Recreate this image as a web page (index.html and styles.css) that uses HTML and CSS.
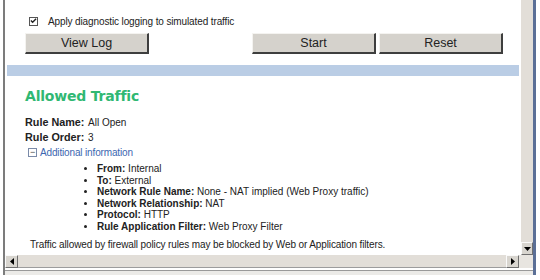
FILE: index.html
```html
<!DOCTYPE html>
<html lang="en">
<head>
    <meta charset="UTF-8">
    <title>Traffic Simulator</title>
    <link rel="stylesheet" href="styles.css">
</head>
<body>

    <div class="frame">
        <div class="pane">
            <div class="content">

                <!-- Optionen -->
                <label class="option">
                    <span class="checkbox">
                        <svg width="8" height="8" viewBox="0 0 8 8"><path d="M1 3.5 L3 5.5 L7 1.5" fill="none" stroke="#222" stroke-width="1.6"/></svg>
                    </span>
                    Apply diagnostic logging to simulated traffic
                </label>

                <div class="buttons">
                    <button class="btn">View Log</button>
                    <span class="spacer"></span>
                    <button class="btn">Start</button>
                    <button class="btn">Reset</button>
                </div>

                <div class="divider"></div>

                <!-- Ergebnis -->
                <h1 class="result">Allowed Traffic</h1>

                <div class="rule">
                    <span class="key">Rule Name:</span><span>All Open</span>
                    <span class="key">Rule Order:</span><span>3</span>
                </div>

                <div class="more">
                    <span class="toggle">&minus;</span> Additional information
                </div>

                <ul class="details">
                    <li><b>From:</b> Internal</li>
                    <li><b>To:</b> External</li>
                    <li><b>Network Rule Name:</b> None - NAT implied (Web Proxy traffic)</li>
                    <li><b>Network Relationship:</b> NAT</li>
                    <li><b>Protocol:</b> HTTP</li>
                    <li><b>Rule Application Filter:</b> Web Proxy Filter</li>
                </ul>

                <p class="note">Traffic allowed by firewall policy rules may be blocked by Web or Application filters.</p>
            </div>

            <!-- vertikale Scrollbar -->
            <div class="vscroll">
                <span class="track"></span>
                <span class="arrow">
                    <svg width="7" height="4" viewBox="0 0 7 4"><path d="M0 0 H7 L3.5 4 Z" fill="#000"/></svg>
                </span>
            </div>
        </div>

        <!-- horizontale Scrollbar -->
        <div class="hscroll">
            <span class="arrow">
                <svg width="4" height="7" viewBox="0 0 4 7"><path d="M4 0 V7 L0 3.5 Z" fill="#000"/></svg>
            </span>
            <span class="track"></span>
            <span class="arrow">
                <svg width="4" height="7" viewBox="0 0 4 7"><path d="M0 0 V7 L4 3.5 Z" fill="#000"/></svg>
            </span>
            <span class="corner"></span>
        </div>
        <div class="status"></div>
    </div>

</body>
</html>
```

FILE: styles.css
```css
* {
    margin: 0;
    padding: 0;
    box-sizing: border-box;
}

body {
    font-family: "Liberation Sans", Arial, sans-serif;
    font-size: 10px;
    color: #222;
    background-color: #ffffff;
    width: 540px;
    height: 280px;
    overflow: hidden;
}

.frame {
    margin-left: 3px;
    width: 533px;
    border-left: 2px solid #7c7c7c;
    border-right: 3px solid #5b6f96;
    height: 275px;
    display: flex;
    flex-direction: column;
}

.pane {
    display: flex;
    height: 255px;
}

.content {
    flex: 1;
    padding: 16px 0 0 2px;
}

/* Checkbox */
.option {
    display: flex;
    align-items: center;
    gap: 10px;
    margin-left: 22px;
    height: 10px;
    letter-spacing: -0.12px;
}

.checkbox {
    width: 9px;
    height: 9px;
    border: 1px solid #555;
    background-color: #fff;
    display: flex;
    align-items: center;
    justify-content: center;
}

/* Buttons */
.buttons {
    display: flex;
    margin: 7px 0 0 18px;
    gap: 3px;
}

.btn {
    width: 124px;
    height: 21px;
    font-family: "Liberation Sans", Arial, sans-serif;
    font-size: 12.5px;
    color: #222;
    background-color: #d5d2cc;
    border: 1px solid;
    border-color: #f4f3f0 #3e3e3e #3e3e3e #f4f3f0;
    border-right-width: 2px;
    border-bottom-width: 2px;
}

.spacer {
    width: 97px;
}

.divider {
    height: 11px;
    margin: 11px 0 0 0;
    background-color: #bacde5;
}

/* Ergebnis */
.result {
    font-family: "DejaVu Sans", sans-serif;
    font-size: 14px;
    font-weight: bold;
    color: #30b873;
    margin: 12px 0 0 18px;
    letter-spacing: -0.2px;
}

.rule {
    display: grid;
    grid-template-columns: 63px auto;
    justify-content: start;
    margin: 12px 0 0 18px;
    row-gap: 2px;
    line-height: 13px;
}

.key {
    font-size: 10.8px;
    font-weight: bold;
}

.more {
    margin: 2px 0 0 21px;
    color: #3c67b0;
    display: flex;
    align-items: center;
    gap: 3px;
    line-height: 13px;
    letter-spacing: -0.15px;
}

.toggle {
    width: 9px;
    height: 9px;
    border: 1px solid #7a8aa8;
    font-size: 9px;
    line-height: 6px;
    text-align: center;
    color: #444;
}

.details {
    margin: 4px 0 0 90px;
    line-height: 11.6px;
}

.note {
    margin: 5px 0 0 23px;
    line-height: 13px;
    letter-spacing: -0.12px;
}

/* Scrollbars */
.vscroll {
    width: 12px;
    margin-left: 2px;
    display: flex;
    flex-direction: column;
    background-color: #e2ded8;
}

.vscroll .track {
    flex: 1;
}

.arrow {
    width: 13px;
    height: 13px;
    background-color: #d8d5cf;
    border: 1px solid;
    border-color: #fafafa #6f6f6f #6f6f6f #fafafa;
    display: flex;
    align-items: center;
    justify-content: center;
}

.vscroll .arrow {
    width: 12px;
}

.hscroll {
    display: flex;
    height: 13px;
    background-color: #e2ded8;
}

.hscroll .track {
    flex: 1;
    border-bottom: 1px solid #9c9c9c;
}

.corner {
    width: 14px;
    background-color: #e8e5e0;
}

.status {
    margin-top: 2px;
    border-top: 1px solid #9a9a9a;
    flex: 1;
    background-color: #ecebe8;
}
```
